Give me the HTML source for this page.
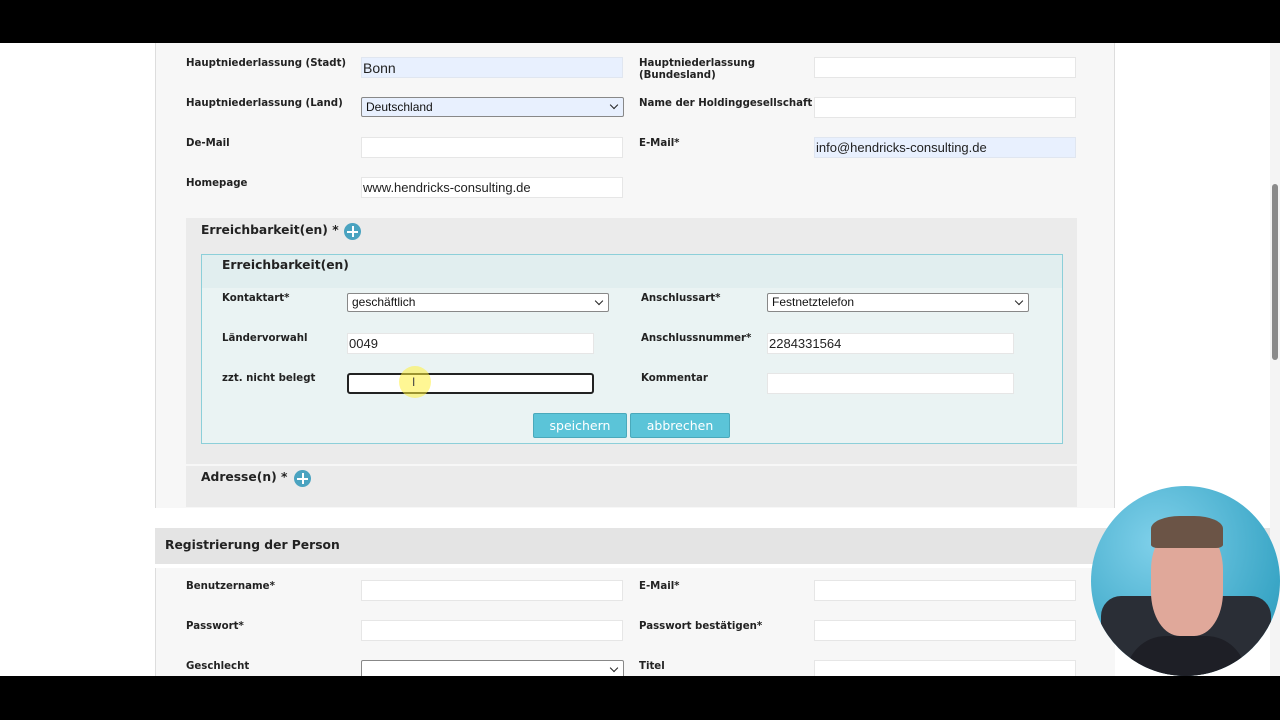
<!DOCTYPE html>
<html><head><meta charset="utf-8"><style>
*{margin:0;padding:0;box-sizing:border-box}
body{width:1280px;height:720px;overflow:hidden;background:#fff;position:relative;font-family:"Liberation Sans",Arial,sans-serif}
.a{position:absolute}
.l{position:absolute;font-family:"DejaVu Sans",Verdana,sans-serif;font-weight:bold;font-size:10.2px;color:#222;line-height:12px;white-space:nowrap}
.i{position:absolute;background:#fff;border:1px solid #e6e6e6;font-size:13px;color:#222;padding-left:1px;line-height:20px;height:21px}
.s{position:absolute;background:#fff;border:1px solid #888;border-radius:2px;font-size:12px;color:#111;padding-left:4px;line-height:17px;height:19px}
.s:after{content:"";position:absolute;right:6px;top:4px;width:5px;height:5px;border-right:1.5px solid #222;border-bottom:1.5px solid #222;transform:rotate(45deg)}
.h{position:absolute;font-family:"DejaVu Sans",Verdana,sans-serif;font-weight:bold;font-size:12.3px;color:#222}
.plus{position:absolute;width:17px;height:17px;border-radius:50%;background:#4aa3c0}
.plus:before{content:"";position:absolute;left:3px;top:7.5px;width:11px;height:2px;background:#fff}
.plus:after{content:"";position:absolute;top:3px;left:7.5px;height:11px;width:2px;background:#fff}
.btn{position:absolute;background:#5bc4d8;border:1px solid #4aa9bb;border-radius:2px;color:#fff;font-family:"DejaVu Sans",Verdana,sans-serif;font-size:12.5px;text-align:center;line-height:23px;height:25px}
</style></head><body>
<div class="a" style="left:0;top:0;width:1280px;height:43px;background:#000"></div>
<div class="a" style="left:155px;top:43px;width:960px;height:465px;background:#f7f7f7;border-left:1px solid #ddd;border-right:1px solid #ddd"></div>

<div class="l" style="left:186px;top:58px">Hauptniederlassung (Stadt)</div>
<div class="i" style="left:361px;top:57px;width:262px;background:#e8f0fe;border-color:#e0e6f0;font-size:14px;line-height:21px">Bonn</div>
<div class="l" style="left:639px;top:58px">Hauptniederlassung<br>(Bundesland)</div>
<div class="i" style="left:814px;top:57px;width:262px"></div>

<div class="l" style="left:186px;top:98px">Hauptniederlassung (Land)</div>
<div class="s" style="left:361px;top:97px;width:263px;height:20px;background:#e8f0fe;line-height:18px">Deutschland</div>
<div class="l" style="left:639px;top:98px">Name der Holdinggesellschaft</div>
<div class="i" style="left:814px;top:97px;width:262px"></div>

<div class="l" style="left:186px;top:138px">De-Mail</div>
<div class="i" style="left:361px;top:137px;width:262px"></div>
<div class="l" style="left:639px;top:138px">E-Mail*</div>
<div class="i" style="left:814px;top:137px;width:262px;background:#e8f0fe;border-color:#e0e6f0">info@hendricks-consulting.de</div>

<div class="l" style="left:186px;top:178px">Homepage</div>
<div class="i" style="left:361px;top:177px;width:262px">www.hendricks-consulting.de</div>

<div class="a" style="left:186px;top:218px;width:891px;height:246px;background:#ebebeb"></div>
<div class="h" style="left:201px;top:223px">Erreichbarkeit(en) *</div>
<div class="plus" style="left:344px;top:223px"></div>

<div class="a" style="left:201px;top:254px;width:862px;height:190px;background:#eaf3f3;border:1px solid #8ccfd9"></div>
<div class="a" style="left:202px;top:255px;width:860px;height:33px;background:#e1eeef"></div>
<div class="h" style="left:222px;top:258px">Erreichbarkeit(en)</div>

<div class="l" style="left:222px;top:293px">Kontaktart*</div>
<div class="s" style="left:347px;top:293px;width:262px">geschäftlich</div>
<div class="l" style="left:641px;top:293px">Anschlussart*</div>
<div class="s" style="left:767px;top:293px;width:262px">Festnetztelefon</div>

<div class="l" style="left:222px;top:333px">Ländervorwahl</div>
<div class="i" style="left:347px;top:333px;width:247px">0049</div>
<div class="l" style="left:641px;top:333px">Anschlussnummer*</div>
<div class="i" style="left:767px;top:333px;width:247px">2284331564</div>

<div class="l" style="left:222px;top:373px">zzt. nicht belegt</div>
<div class="a" style="left:347px;top:373px;width:247px;height:21px;background:#fff;border:2px solid #222;border-radius:3px"></div>
<div class="a" style="left:399px;top:366px;width:32px;height:32px;border-radius:50%;background:rgba(255,240,60,.55)"></div>
<div class="a" style="left:412px;top:375px;font-size:12px;color:#444">I</div>
<div class="l" style="left:641px;top:373px">Kommentar</div>
<div class="i" style="left:767px;top:373px;width:247px"></div>

<div class="btn" style="left:533px;top:413px;width:94px">speichern</div>
<div class="btn" style="left:630px;top:413px;width:100px">abbrechen</div>

<div class="a" style="left:186px;top:466px;width:891px;height:41px;background:#ebebeb"></div>
<div class="h" style="left:201px;top:470px">Adresse(n) *</div>
<div class="plus" style="left:294px;top:470px"></div>

<div class="a" style="left:155px;top:528px;width:1115px;height:36px;background:#e4e4e4"></div>
<div class="h" style="left:165px;top:538px">Registrierung der Person</div>
<div class="a" style="left:155px;top:568px;width:960px;height:110px;background:#f7f7f7;border-left:1px solid #ddd"></div>

<div class="l" style="left:186px;top:581px">Benutzername*</div>
<div class="i" style="left:361px;top:580px;width:262px"></div>
<div class="l" style="left:639px;top:581px">E-Mail*</div>
<div class="i" style="left:814px;top:580px;width:262px"></div>
<div class="l" style="left:186px;top:621px">Passwort*</div>
<div class="i" style="left:361px;top:620px;width:262px"></div>
<div class="l" style="left:639px;top:621px">Passwort bestätigen*</div>
<div class="i" style="left:814px;top:620px;width:262px"></div>
<div class="l" style="left:186px;top:661px">Geschlecht</div>
<div class="s" style="left:361px;top:660px;width:263px"></div>
<div class="l" style="left:639px;top:661px">Titel</div>
<div class="i" style="left:814px;top:660px;width:262px"></div>

<div class="a" style="left:1270px;top:43px;width:10px;height:633px;background:#f4f4f4"></div>
<div class="a" style="left:1272px;top:184px;width:6px;height:176px;background:#8a8a8a;border-radius:3px"></div>

<div class="a" style="left:1091px;top:486px;width:189px;height:190px;border-radius:50%;background:radial-gradient(circle at 35% 30%,#7fd0ea,#3aa6c6 70%,#2f8fae);overflow:hidden">
<div class="a" style="left:10px;top:110px;width:170px;height:80px;background:#2a2e36;border-radius:20px 20px 0 0"></div>
<div class="a" style="left:60px;top:40px;width:72px;height:110px;border-radius:40%;background:#e0a89a"></div>
<div class="a" style="left:60px;top:30px;width:72px;height:32px;border-radius:40% 40% 10% 10%;background:#6b5446"></div>
<div class="a" style="left:35px;top:150px;width:120px;height:50px;background:#1e1f26;border-radius:40px 40px 0 0"></div>
</div>
<div class="a" style="left:0;top:676px;width:1280px;height:44px;background:#000"></div>
</body></html>
